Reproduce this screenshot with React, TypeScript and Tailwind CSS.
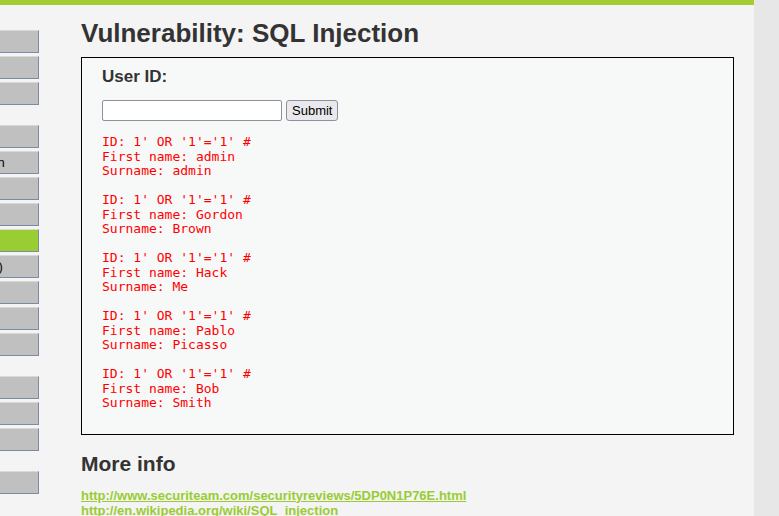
const menu = [
  ["Home", "Instructions", "Setup"],
  ["Brute Force", "Command Execution", "CSRF", "File Inclusion", "SQL Injection", "SQL Injection (Blind)", "Upload", "XSS reflected", "XSS stored"],
  ["DVWA Security", "PHP Info", "About"],
  ["Logout"],
];

const rows = [
  ["admin", "admin"],
  ["Gordon", "Brown"],
  ["Hack", "Me"],
  ["Pablo", "Picasso"],
  ["Bob", "Smith"],
];

export default function App() {
  return (
    <div className="min-h-screen flex bg-[#e7e7e7] font-['Liberation_Sans',Arial,sans-serif] text-[#333]">
      <div className="w-[754px] min-h-[516px] bg-[#f4f4f4] overflow-hidden">
        <div className="h-[5px] bg-[#a3cd33]" />
        <div className="flex">
          {/* Side menu, scrolled so only its right edge shows */}
          <nav className="w-[180px] shrink-0 -ml-[141px] pt-[25px] flex flex-col gap-[20px]">
            {menu.map((group, g) => (
              <ul key={g} className="flex flex-col gap-[3px]">
                {group.map((item) => (
                  <li
                    key={item}
                    className={`h-[23px] flex items-center pl-[25px] whitespace-nowrap text-[13px] text-black border-t border-t-[#d8d8d8] border-b border-r border-b-[#7c8aa5] border-r-[#7c8aa5] ${
                      item === "SQL Injection" ? "bg-[#9acd32]" : "bg-[#c0c0c0]"
                    }`}
                  >
                    {item}
                  </li>
                ))}
              </ul>
            ))}
          </nav>

          <main className="flex-1 ml-[42px] pr-[20px]">
            <h1 className="mt-[13px] text-[26px] leading-[30px] font-bold text-[#333]">Vulnerability: SQL Injection</h1>

            <div className="mt-[9px] border border-black bg-[#f7f9f8] pl-[20px] pt-[10px] pb-[23px]">
              <h2 className="text-[17px] leading-[18px] font-bold text-[#333]">User ID:</h2>
              <form className="mt-[14px] flex items-center gap-[4px]">
                <input type="text" className="w-[180px] h-[21px] bg-white border border-[#8f8f9d] rounded-[2px]" />
                <button type="button" className="h-[21px] px-[5px] bg-[#e9e9ed] border border-[#8f8f9d] rounded-[3px] text-[13px] text-black">
                  Submit
                </button>
              </form>
              <div className="mt-[14px] flex flex-col gap-[14.5px]">
                {rows.map(([first, last]) => (
                  <pre key={first} className="font-['DejaVu_Sans_Mono',monospace] text-[13px] leading-[14.5px] text-[#ff0000]">
                    {`ID: 1' OR '1'='1' #\nFirst name: ${first}\nSurname: ${last}`}
                  </pre>
                ))}
              </div>
            </div>

            <h2 className="mt-[17px] text-[21px] leading-[23px] font-bold text-[#333]">More info</h2>
            <ul className="mt-[13px] flex flex-col text-[13px] leading-[15px] font-bold">
              <li>
                <a className="text-[#9c3] underline">http://www.securiteam.com/securityreviews/5DP0N1P76E.html</a>
              </li>
              <li>
                <a className="text-[#9c3] underline">http://en.wikipedia.org/wiki/SQL_injection</a>
              </li>
            </ul>
          </main>
        </div>
      </div>
    </div>
  );
}
